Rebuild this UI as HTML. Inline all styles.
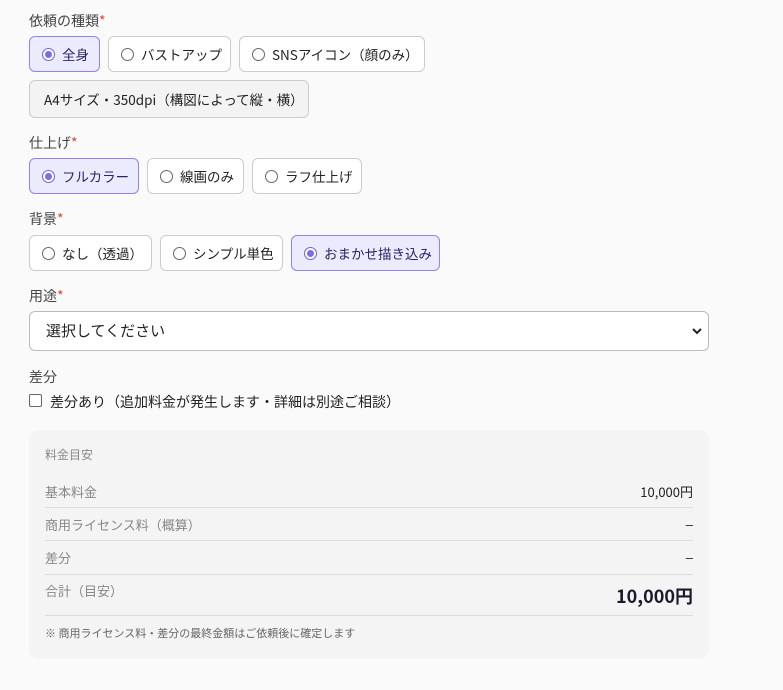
<!DOCTYPE html>
<html><head><meta charset="utf-8"><style>
*{box-sizing:border-box;margin:0;padding:0}
body{width:783px;height:690px;background:#fafafa;font-family:"Noto Sans CJK JP","Liberation Sans",sans-serif;color:#222;position:relative;overflow:hidden;font-size:14px}
.a{position:absolute;line-height:1.4}
.lbl{font-size:14px;color:#444}
.lbl b{color:#e0452a;font-weight:normal}
.chip{position:absolute;height:36px;border:1px solid #ccc;border-radius:6px;background:#fff;display:flex;align-items:center;padding-left:12px;font-size:13.5px;color:#222;white-space:nowrap}
.chip.on{background:#ecebfd;border-color:#8f84ef;color:#2a2466}
.r{width:13px;height:13px;border:1px solid #666;border-radius:50%;margin-right:7px;display:inline-block;position:relative;background:#fff;flex:none}
.on .r{border-color:#6e62e0}
.on .r:after{content:"";position:absolute;left:2px;top:2px;width:7px;height:7px;border-radius:50%;background:#7a6ee8}
.row{position:absolute;left:45px;right:90px;font-size:13px;color:#888;display:flex;justify-content:space-between;align-items:center}
.row span:last-child{color:#222}
.d{font-family:"Liberation Sans",sans-serif}
.line{position:absolute;left:45px;width:648px;height:1px;background:#ddd}
</style></head><body>
<div class="a lbl" style="left:29px;top:12px">依頼の種類<b>*</b></div>
<div class="chip on" style="left:29px;top:36px;width:71px"><i class="r"></i>全身</div>
<div class="chip" style="left:108px;top:36px;width:123px"><i class="r"></i>バストアップ</div>
<div class="chip" style="left:239px;top:36px;width:186px"><i class="r"></i>SNSアイコン（顔のみ）</div>
<div class="chip" style="left:29px;top:80px;width:280px;height:38px;background:#f3f3f3;padding-left:14px">A4サイズ・350dpi（構図によって縦・横）</div>
<div class="a lbl" style="left:29px;top:134px">仕上げ<b>*</b></div>
<div class="chip on" style="left:29px;top:158px;width:110px"><i class="r"></i>フルカラー</div>
<div class="chip" style="left:147px;top:158px;width:97px"><i class="r"></i>線画のみ</div>
<div class="chip" style="left:252px;top:158px;width:110px"><i class="r"></i>ラフ仕上げ</div>
<div class="a lbl" style="left:29px;top:210px">背景<b>*</b></div>
<div class="chip" style="left:29px;top:235px;width:123px"><i class="r"></i>なし（透過）</div>
<div class="chip" style="left:160px;top:235px;width:123px"><i class="r"></i>シンプル単色</div>
<div class="chip on" style="left:291px;top:235px;width:149px"><i class="r"></i>おまかせ描き込み</div>
<div class="a lbl" style="left:29px;top:287px">用途<b>*</b></div>
<div class="a" style="left:29px;top:311px;width:680px;height:40px;border:1px solid #bbb;border-radius:6px;background:#fff;padding-left:16px;line-height:38px;font-size:15px">選択してください
<svg style="position:absolute;right:6px;top:15px" width="10" height="8" viewBox="0 0 10 8"><path d="M1 2l4 4 4-4" stroke="#222" stroke-width="2" fill="none"/></svg></div>
<div class="a lbl" style="left:29px;top:368px">差分</div>
<div class="a" style="left:29px;top:394px;width:13px;height:13px;border:1px solid #666;border-radius:2px;background:#fff"></div>
<div class="a" style="left:50px;top:393px;font-size:14px">差分あり（追加料金が発生します・詳細は別途ご相談）</div>
<div class="a" style="left:29px;top:430px;width:680px;height:229px;background:#f4f4f4;border-radius:10px"></div>
<div class="a" style="left:45px;top:447px;font-size:12px;color:#888">料金目安</div>
<div class="row" style="top:482px"><span>基本料金</span><span>10,000円</span></div>
<div class="line" style="top:507px"></div>
<div class="row" style="top:515px"><span>商用ライセンス料（概算）</span><span class="d">–</span></div>
<div class="line" style="top:540px"></div>
<div class="row" style="top:548px"><span>差分</span><span class="d">–</span></div>
<div class="line" style="top:574px"></div>
<div class="a" style="left:45px;top:582px;font-size:13px;color:#888">合計（目安）</div>
<div class="a" style="right:90px;top:584px;font-size:18px;font-weight:bold;color:#1a1a2a">10,000円</div>
<div class="line" style="top:615px"></div>
<div class="a" style="left:45px;top:626px;font-size:11px;color:#666">※ 商用ライセンス料・差分の最終金額はご依頼後に確定します</div>
</body></html>
